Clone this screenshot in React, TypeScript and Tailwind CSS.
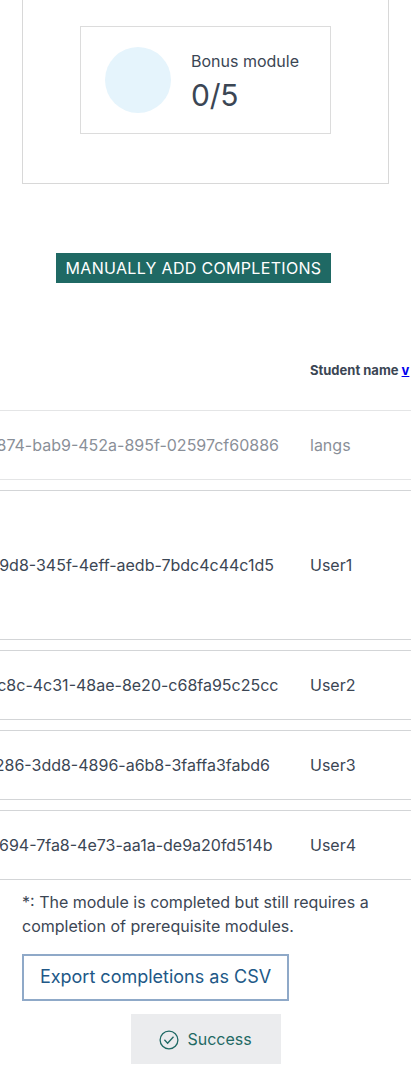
type Student = { id: string; name: string; idWidth: string; row: string };

const students: Student[] = [
  { id: "874-bab9-452a-895f-02597cf60886", name: "langs", idWidth: "w-[279px]", row: "h-[70px] opacity-60" },
  { id: "9d8-345f-4eff-aedb-7bdc4c44c1d5", name: "User1", idWidth: "w-[274px]", row: "h-[150px]" },
  { id: "c8c-4c31-48ae-8e20-c68fa95c25cc", name: "User2", idWidth: "w-[278.5px]", row: "h-[70px]" },
  { id: "286-3dd8-4896-a6b8-3faffa3fabd6", name: "User3", idWidth: "w-[270px]", row: "h-[70px]" },
  { id: "694-7fa8-4e73-aa1a-de9a20fd514b", name: "User4", idWidth: "w-[272.5px]", row: "h-[70px]" },
];

function BonusCard() {
  return (
    <section className="mx-[22px] flex h-[184px] justify-center border border-t-0 border-[#d8d8d8] pt-[26px]">
      <div className="flex h-[108px] w-[251px] border border-[#dcdcdc] pt-5 pl-6">
        <div className="size-[66px] rounded-full bg-[#e5f4fc]" />
        <div className="ml-5 pt-[2px]">
          <p className="leading-6">Bonus module</p>
          <p className="mt-[1px] text-[30px] leading-[42px] tracking-[-0.2px]">0/5</p>
        </div>
      </div>
    </section>
  );
}

function StudentRow({ student }: { student: Student }) {
  return (
    <div className={`flex items-center border-y border-[#d3d5d7] ${student.row}`}>
      <div className="w-[310px] shrink-0">
        <div className={`flex justify-end whitespace-nowrap ${student.idWidth}`}>
          <span>{student.id}</span>
        </div>
      </div>
      <span>{student.name}</span>
    </div>
  );
}

export default function App() {
  return (
    <main className="h-[1080px] w-full overflow-hidden bg-white font-['Inter',sans-serif] text-base text-[#3b4654]">
      <BonusCard />
      <button className="mt-[69px] ml-[56px] block h-[30px] w-[275px] bg-[#1f6964] text-center leading-[30px] tracking-[0.32px] whitespace-nowrap text-white">
        MANUALLY ADD COMPLETIONS
      </button>
      <div className="mt-[77px] h-[50px] pl-[310px] text-[13px] leading-5 font-bold whitespace-nowrap">
        Student name <a className="text-[#0000ee] underline">v</a>
      </div>
      <div className="flex flex-col gap-[10px]">
        {students.map((student) => (
          <StudentRow key={student.id} student={student} />
        ))}
      </div>
      <p className="mt-[10px] ml-[22px] w-[367px] leading-6">
        *: The module is completed but still requires a completion of prerequisite modules.
      </p>
      <button className="mt-[16px] ml-[22px] block h-[47px] w-[267px] border-2 border-[#8fa9c8] pb-[2px] text-center text-[18px] leading-[41px] whitespace-nowrap text-[#215887]">
        Export completions as CSV
      </button>
      <div className="mt-[13px] ml-[131px] flex h-[50px] w-[150px] items-center bg-[#ebecee] pl-7 text-[#1f6964]">
        <svg viewBox="0 0 20 20" className="mt-[2px] size-5" fill="none" stroke="currentColor" strokeWidth="1.3">
          <circle cx="10" cy="10" r="8.9" />
          <path d="m5.4 9.8 3.2 3.4 5.9-6.5" />
        </svg>
        <span className="ml-[8.5px]">Success</span>
      </div>
    </main>
  );
}
